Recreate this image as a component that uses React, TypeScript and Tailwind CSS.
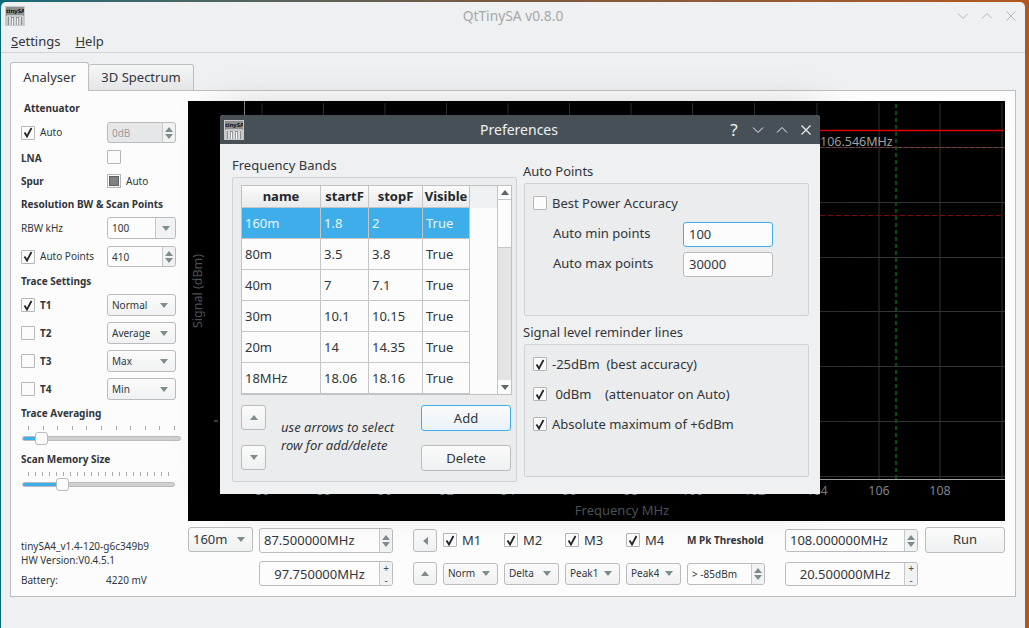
import React from 'react';

const Tri = ({ dir = 'down', color = '#7f8c8d', size = 8 }: { dir?: 'up' | 'down' | 'left'; color?: string; size?: number }) => {
  const pts = dir === 'up' ? '0,5 4,0 8,5' : dir === 'down' ? '0,0 8,0 4,5' : '5,0 5,8 0,4';
  const box = dir === 'left' ? '0 0 5 8' : '0 0 8 5';
  const w = dir === 'left' ? (size * 5) / 8 : size;
  const h = dir === 'left' ? size : (size * 5) / 8;
  return (
    <svg width={w} height={h} viewBox={box} className="shrink-0">
      <polygon points={pts} fill={color} />
    </svg>
  );
};

const Logo = () => (
  <div className="relative w-[20px] h-[20px] shrink-0 bg-[#8b8f90] overflow-hidden border border-[#c8cacb]">
    <span className="absolute left-0 right-0 top-[1px] text-center text-[6px] leading-[7px] font-bold text-[#111]">tinySA</span>
    <svg width="18" height="10" viewBox="0 0 18 10" className="absolute left-0 bottom-0">
      <path d="M1 10V1h16v9" fill="none" stroke="#fff" strokeWidth="1" />
      <path d="M4 10V2M6.500 10V3M9 10V2M11.500 10V3M14 10V2" stroke="#fff" strokeWidth="1.300" />
    </svg>
  </div>
);

const Check = ({ on = false }: { on?: boolean }) => (
  <span className="w-[14px] h-[14px] shrink-0 border border-[#b4b6b7] bg-[#fcfcfc] rounded-[1px] flex items-center justify-center">
    {on && (
      <svg width="10" height="11" viewBox="0 0 10 11">
        <path d="M1.500 5.500L4 9.500L8.500 1" fill="none" stroke="#232629" strokeWidth="1.800" />
      </svg>
    )}
  </span>
);

const Combo = ({ text, w, h = 'h-[22px]', size = 'text-[10px]' }: { text: string; w: string; h?: string; size?: string }) => (
  <div className={`${w} ${h} ${size} flex items-center justify-between pl-[4px] pr-[7px] border border-[#b9bbbc] rounded-[3px] bg-gradient-to-b from-[#fbfbfb] to-[#f0f1f2] text-[#31363b] shrink-0`}>
    <span className="overflow-hidden whitespace-nowrap">{text}</span>
    <Tri />
  </div>
);

const Spin = ({ text, w, center = false, plus = false, size = 'text-[13px]', disabled = false, h = 'h-[24px]' }: {
  text: string; w: string; center?: boolean; plus?: boolean; size?: string; disabled?: boolean; h?: string;
}) => (
  <div className={`${w} ${h} ${size} flex border border-[#b9bbbc] rounded-[3px] shrink-0 ${disabled ? 'bg-[#e6e7e8] text-[#9a9c9e]' : 'bg-[#fcfcfc] text-[#31363b]'}`}>
    <span className={`flex-1 flex items-center whitespace-nowrap ${center ? 'justify-center pt-[2px]' : 'pl-[4px] pt-[1px]'}`}>{text}</span>
    <div className="w-[13px] border-l border-[#c6c8c9] bg-[#f1f2f3] flex flex-col items-center justify-center gap-[2px] rounded-r-[3px]">
      {plus ? (
        <>
          <span className="text-[10px] leading-[10px] text-[#4d4d4d]">+</span>
          <span className="text-[10px] leading-[10px] text-[#4d4d4d]">-</span>
        </>
      ) : (
        <>
          <Tri dir="up" />
          <Tri />
        </>
      )}
    </div>
  </div>
);

const Heading = ({ children, cls = '' }: { children: React.ReactNode; cls?: string }) => (
  <div className={`h-[16px] flex items-center font-bold text-[10px] text-[#31363b] whitespace-nowrap pt-[1px] ${cls}`}>{children}</div>
);

const ArrowBtn = ({ dir, cls }: { dir: 'up' | 'down' | 'left'; cls: string }) => (
  <div className={`${cls} flex items-center justify-center border border-[#b9bbbc] rounded-[3px] bg-gradient-to-b from-[#fbfbfb] to-[#eff0f1] shrink-0`}>
    <Tri dir={dir} />
  </div>
);

const Slider = ({ width, ticks, fill, knob }: { width: string; ticks: number; fill: string; knob: string }) => (
  <div className={`${width} ml-[1px]`}>
    <div className="flex justify-between px-[6px] h-[5px]">
      {Array.from({ length: ticks }).map((_, i) => (
        <span key={i} className="w-px h-[4px] bg-[#a9abac]" />
      ))}
    </div>
    <div className="relative mt-[5px] h-[5px] rounded-full bg-[#cfd0d1] border border-[#b9bbbc]">
      <div className={`absolute left-0 top-0 bottom-0 rounded-l-full bg-[#3daee9] ${fill}`} />
      <div className={`absolute top-[-5px] w-[13px] h-[13px] rounded-[3px] border border-[#b9bbbc] bg-[#fafbfb] ${knob}`} />
    </div>
  </div>
);

const Sidebar = () => (
  <div className="w-[177px] shrink-0 flex flex-col pl-[10px] pt-[9px] pb-[9px] text-[10px] text-[#31363b]">
    <Heading cls="pl-[3px]">Attenuator</Heading>
    <div className="mt-[6px] h-[21px] flex items-center">
      <Check on />
      <span className="ml-[5px] w-[67px]">Auto</span>
      <Spin text="0dB" w="w-[69px]" h="h-[21px]" size="text-[10px]" disabled />
    </div>
    <div className="mt-[7px] h-[14px] flex items-center font-bold">
      <span className="w-[86px] pt-[2px]">LNA</span>
      <Check />
    </div>
    <div className="mt-[10px] h-[14px] flex items-center">
      <span className="w-[86px] font-bold pt-[1px]">Spur</span>
      <span className="w-[14px] h-[14px] border border-[#b4b6b7] bg-[#fcfcfc] flex items-center justify-center">
        <span className="w-[10px] h-[10px] bg-[#808283] border border-[#5d5f60]" />
      </span>
      <span className="ml-[5px]">Auto</span>
    </div>
    <Heading cls="mt-[8px]">Resolution BW &amp; Scan Points</Heading>
    <div className="mt-[5px] h-[22px] flex items-center">
      <span className="w-[86px]">RBW kHz</span>
      <div className="w-[69px] h-[22px] flex items-center border border-[#b9bbbc] rounded-[3px] bg-[#fcfcfc]">
        <span className="flex-1 pl-[4px]">100</span>
        <div className="w-[20px] h-full border-l border-[#c6c8c9] bg-[#f1f2f3] flex items-center justify-center rounded-r-[3px]">
          <Tri />
        </div>
      </div>
    </div>
    <div className="mt-[7px] h-[21px] flex items-center">
      <Check on />
      <span className="ml-[5px] w-[67px]">Auto Points</span>
      <Spin text="410" w="w-[69px]" h="h-[21px]" size="text-[10px]" />
    </div>
    <Heading cls="mt-[6px]">Trace Settings</Heading>
    <div className="mt-[5px] flex flex-col gap-[6px]">
      {[['T1', 'Normal', true], ['T2', 'Average', false], ['T3', 'Max', false], ['T4', 'Min', false]].map(([t, m, on]) => (
        <div key={t as string} className="h-[22px] flex items-center">
          <Check on={on as boolean} />
          <span className="ml-[5px] w-[67px] font-bold pt-[1px]">{t as string}</span>
          <Combo text={m as string} w="w-[69px]" />
        </div>
      ))}
    </div>
    <Heading cls="mt-[5px]">Trace Averaging</Heading>
    <div className="mt-[5px]">
      <Slider width="w-[159px]" ticks={11} fill="w-[14px]" knob="left-[12px]" />
    </div>
    <Heading cls="mt-[10px]">Scan Memory Size</Heading>
    <div className="mt-[5px]">
      <Slider width="w-[153px]" ticks={21} fill="w-[34px]" knob="left-[33px]" />
    </div>
    <div className="mt-auto text-[#31363b] leading-[14px]">
      <div>tinySA4_v1.4-120-g6c349b9</div>
      <div>HW Version:V0.4.5.1</div>
      <div className="mt-[6px] flex">
        <span className="w-[85px]">Battery:</span>
        <span>4220 mV</span>
      </div>
    </div>
  </div>
);

const gridX = [262, 323.5, 385, 446.5, 508, 569.5, 631, 692.5, 754.5, 817, 879, 940, 1002];
const gridY = [147, 202, 257, 311, 366, 421, 476];
const labels = ['86', '88', '90', '92', '94', '96', '98', '100', '102', '104', '106', '108'];

// spectrum plot, coordinates are window px minus the plot origin (188,101)
const Plot = () => (
  <svg width="817" height="420" viewBox="188 101 817 420" className="block bg-black shrink-0" fontFamily="'Noto Sans', sans-serif">
    {gridX.map((x) => (
      <line key={x} x1={x} y1={103} x2={x} y2={479} stroke="#333" strokeWidth="1" />
    ))}
    <line x1={244.500} y1={101} x2={244.500} y2={479} stroke="#8a8a8a" strokeWidth="1" />
    {gridY.map((y) => (
      <line key={y} x1={244} y1={y + 0.5} x2={1005} y2={y + 0.5} stroke="#333" strokeWidth="1" />
    ))}
    <line x1={244} y1={479.500} x2={1005} y2={479.500} stroke="#a8a8a8" strokeWidth="1" />
    <line x1={244} y1={130.500} x2={1004} y2={130.500} stroke="#e00000" strokeWidth="1.300" />
    <line x1={244} y1={147.500} x2={1005} y2={147.500} stroke="#7a4040" strokeWidth="1" strokeDasharray="4 2" />
    <line x1={244} y1={215.500} x2={1004} y2={215.500} stroke="#7a0c10" strokeWidth="1" strokeDasharray="5 3" />
    <line x1={896} y1={104} x2={896} y2={479} stroke="#0b5e10" strokeWidth="1.600" strokeDasharray="4 3" />
    <text x={820} y={146} fontSize="12.500" fill="#a0a4a6">106.546MHz</text>
    {labels.map((l, i) => (
      <text key={l} x={gridX[i]} y={495} fontSize="12.500" fill="#7d8285" textAnchor="middle">{l}</text>
    ))}
    <text x={622} y={515} fontSize="13" fill="#4f565c" textAnchor="middle">Frequency MHz</text>
    <text transform="translate(202 291) rotate(-90)" fontSize="12.500" fill="#4f565c" textAnchor="middle">Signal (dBm)</text>
    <line x1={214} y1={421} x2={218} y2={421} stroke="#8a8a8a" />
  </svg>
);

const Controls = () => (
  <div className="flex-1 flex flex-col text-[#31363b]">
    <div className="mt-[6px] h-[26px] flex items-start">
      <Combo text="160m" w="w-[65px]" h="h-[25px]" size="text-[13px]" />
      <Spin text="87.500000MHz" w="w-[134px] ml-[6px] mt-[1px]" h="h-[25px]" />
      <ArrowBtn dir="left" cls="w-[24px] h-[23px] ml-[20px] mt-[2px]" />
      <div className="w-[6px]" />
      {['M1', 'M2', 'M3', 'M4'].map((m) => (
        <div key={m} className="w-[61px] h-[14px] mt-[6px] flex items-center text-[13px]">
          <Check on />
          <span className="ml-[5px] pt-[1px]">{m}</span>
        </div>
      ))}
      <span className="mt-[6px] h-[14px] flex items-center text-[10px] font-bold w-[98px] whitespace-nowrap pt-[1px]">M Pk Threshold</span>
      <Spin text="108.000000MHz" w="w-[133px] mt-[2px]" h="h-[23px]" />
      <div className="ml-[7px] w-[80px] h-[26px] flex items-center justify-center text-[13px] border border-[#b9bbbc] rounded-[3px] bg-gradient-to-b from-[#fbfbfb] to-[#eff0f1]">Run</div>
    </div>
    <div className="mt-[8px] h-[25px] flex items-center">
      <div className="w-[71px]" />
      <Spin text="97.750000MHz" w="w-[134px]" h="h-[25px]" center plus />
      <ArrowBtn dir="up" cls="w-[24px] h-[23px] ml-[20px]" />
      <div className="w-[6px]" />
      <div className="flex gap-[6px]">
        {['Norm', 'Delta', 'Peak1', 'Peak4'].map((m) => (
          <Combo key={m} text={m} w="w-[55px]" />
        ))}
      </div>
      <Spin text="> -85dBm" w="w-[78px] ml-[6px]" h="h-[22px]" size="text-[10px]" />
      <Spin text="20.500000MHz" w="w-[133px] ml-[20px]" center plus />
    </div>
  </div>
);

const rows = [
  ['160m', '1.8', '2', 'True'],
  ['80m', '3.5', '3.8', 'True'],
  ['40m', '7', '7.1', 'True'],
  ['30m', '10.1', '10.15', 'True'],
  ['20m', '14', '14.35', 'True'],
  ['18MHz', '18.06', '18.16', 'True'],
  ['', '', '', ''],
];
const colW = ['w-[79px]', 'w-[48px]', 'w-[54px]', 'w-[47px]'];

const BandTable = () => (
  <div className="h-[210px] flex border border-[#bfc1c2] bg-[#fcfcfc] overflow-hidden">
    <div className="flex-1 overflow-hidden">
      <div className="flex h-[22px] bg-[#eff0f1]">
        {['name', 'startF', 'stopF', 'Visible'].map((h, i) => (
          <div key={h} className={`${colW[i]} h-full flex items-center justify-center font-bold border-r border-[#c3c5c6] border-b bg-gradient-to-b from-[#fbfbfb] to-[#e9eaeb] text-[#232629] pt-[1px]`}>{h}</div>
        ))}
      </div>
      {rows.map((r, i) => (
        <div key={i} className={`flex h-[31px] w-[228px] border-b border-[#c3c5c6] ${i === 0 ? 'bg-[#3daee9] text-[#eaf6fc]' : 'text-[#31363b]'}`}>
          {r.map((c, j) => (
            <div key={j} className={`${colW[j]} h-full flex items-center pl-[3px] pt-[1px] border-r border-[#c3c5c6]`}>{c}</div>
          ))}
        </div>
      ))}
    </div>
    <div className="w-[14px] border-l border-[#c3c5c6] flex flex-col bg-[#e3e4e5]">
      <div className="h-[14px] flex items-center justify-center bg-[#fcfcfc] border-b border-[#c3c5c6]">
        <Tri dir="up" color="#5d6467" />
      </div>
      <div className="h-[48px] bg-[#fcfcfc] border-b border-[#c3c5c6]" />
      <div className="flex-1" />
      <div className="h-[14px] flex items-center justify-center bg-[#fcfcfc]">
        <Tri color="#5d6467" />
      </div>
    </div>
  </div>
);

const Box = ({ children, cls }: { children: React.ReactNode; cls: string }) => (
  <div className={`${cls} border border-[#d0d2d3] rounded-[2px] bg-[#ebeced]`}>{children}</div>
);

const Preferences = () => (
  <div className="absolute left-[220px] top-[115px] w-[600px] h-[379px] flex flex-col rounded-t-[4px] bg-[#eff0f1] shadow-[0_0_45px_rgba(0,0,0,0.28)] text-[13px] text-[#31363b]">
    <div className="h-[29px] shrink-0 bg-[#475057] rounded-t-[4px] flex items-center pl-[4px] pr-[8px] text-[#eff0f1]">
      <Logo />
      <span className="flex-1 text-center text-[14px] pl-[66px]">Preferences</span>
      <div className="flex items-center gap-[12px]">
        <span className="text-[17px] leading-none w-[12px] text-center">?</span>
        <svg width="12" height="12" viewBox="0 0 12 12"><path d="M1 3.500L6 8.500L11 3.500" fill="none" stroke="#eff0f1" /></svg>
        <svg width="12" height="12" viewBox="0 0 12 12"><path d="M1 8.500L6 3.500L11 8.500" fill="none" stroke="#eff0f1" /></svg>
        <svg width="12" height="12" viewBox="0 0 12 12"><path d="M1.500 1.500L10.500 10.500M10.500 1.500L1.500 10.500" fill="none" stroke="#eff0f1" strokeWidth="1.200" /></svg>
      </div>
    </div>
    <div className="flex-1 flex pl-[12px]">
      <div className="w-[285px] shrink-0 flex flex-col">
        <div className="h-[18px] mt-[12px] pt-[1px] flex items-center">Frequency Bands</div>
        <Box cls="mt-[3px] h-[305px] flex flex-col pl-[8px] pr-[4px] pt-[7px]">
          <BandTable />
          <div className="flex mt-[10px] pr-[1px]">
            <div className="flex flex-col gap-[15px]">
              <ArrowBtn dir="up" cls="w-[25px] h-[25px]" />
              <ArrowBtn dir="down" cls="w-[25px] h-[25px]" />
            </div>
            <div className="flex-1 pl-[15px] pt-[13px] italic text-[13px] leading-[18px] whitespace-nowrap">
              use arrows to select<br />row for add/delete
            </div>
            <div className="flex flex-col gap-[14px] w-[90px]">
              <div className="h-[26px] pt-[1px] flex items-center justify-center border border-[#3daee9] rounded-[3px] bg-gradient-to-b from-[#fbfbfb] to-[#e8f2f8]">Add</div>
              <div className="h-[26px] pt-[1px] flex items-center justify-center border border-[#b9bbbc] rounded-[3px] bg-gradient-to-b from-[#fbfbfb] to-[#eff0f1]">Delete</div>
            </div>
          </div>
        </Box>
      </div>
      <div className="ml-[7px] w-[285px] flex flex-col">
        <div className="h-[18px] mt-[18px] pt-[1px] flex items-center -ml-px">Auto Points</div>
        <Box cls="mt-[3px] h-[133px] pl-[8px] pt-[12px]">
          <div className="flex items-center gap-[5px] h-[14px]"><Check /><span className="pt-[1px]">Best Power Accuracy</span></div>
          <div className="mt-[12px] flex items-center h-[25px] pl-[20px]">
            <span className="w-[130px] pb-[2px]">Auto min points</span>
            <span className="w-[90px] h-[25px] pt-[1px] flex items-center pl-[5px] border border-[#3daee9] rounded-[3px] bg-[#fcfcfc]">100</span>
          </div>
          <div className="mt-[5px] flex items-center h-[25px] pl-[20px]">
            <span className="w-[130px] pb-[2px]">Auto max points</span>
            <span className="w-[90px] h-[25px] pt-[1px] flex items-center pl-[5px] border border-[#b9bbbc] rounded-[3px] bg-[#fcfcfc]">30000</span>
          </div>
        </Box>
        <div className="h-[18px] mt-[7px] pt-[1px] flex items-center -ml-px">Signal level reminder lines</div>
        <Box cls="mt-[3px] h-[133px] pl-[8px] pt-[12px] flex flex-col gap-[16px]">
          <div className="flex items-center gap-[5px] h-[14px]"><Check on /><span className="whitespace-pre pt-[1px]">-25dBm  (best accuracy)</span></div>
          <div className="flex items-center gap-[5px] h-[14px]"><Check on /><span className="whitespace-pre pt-[1px]"> 0dBm    (attenuator on Auto)</span></div>
          <div className="flex items-center gap-[5px] h-[14px]"><Check on /><span className="pt-[1px]">Absolute maximum of +6dBm</span></div>
        </Box>
      </div>
    </div>
  </div>
);

export default function App() {
  return (
    <div className="relative w-[1029px] h-[628px] overflow-hidden bg-gradient-to-r from-[#0b6a78] via-[#7a5a40] to-[#b2561c] font-['Noto_Sans',sans-serif]">
      <div className="ml-[1px] mt-[2px] w-[1024px] h-[626px] flex flex-col rounded-t-[5px] bg-[#eff0f1] text-[#31363b]">
        <div className="h-[28px] shrink-0 flex items-center pl-[4px] pr-[8px]">
          <Logo />
          <span className="flex-1 text-center text-[13.8px] text-[#a5a8aa] pl-[44px]">QtTinySA v0.8.0</span>
          <div className="flex items-center gap-[12px]">
            <svg width="12" height="12" viewBox="0 0 12 12"><path d="M1 3.500L6 8.500L11 3.500" fill="none" stroke="#b5b8ba" /></svg>
            <svg width="12" height="12" viewBox="0 0 12 12"><path d="M1 8.500L6 3.500L11 8.500" fill="none" stroke="#b5b8ba" /></svg>
            <svg width="12" height="12" viewBox="0 0 12 12"><path d="M1.500 1.500L10.500 10.500M10.500 1.500L1.500 10.500" fill="none" stroke="#b5b8ba" /></svg>
          </div>
        </div>
        <div className="h-[23px] shrink-0 flex items-center pl-[10px] gap-[15px] text-[13px] border-b border-[#d0d2d3]">
          <span className="pt-[1px]"><u>S</u>ettings</span>
          <span className="pt-[1px]"><u>H</u>elp</span>
        </div>
        <div className="mt-[9px] ml-[9px] h-[29px] shrink-0 flex items-end text-[13px] relative z-10">
          <div className="w-[79px] h-[29px] pt-[1px] flex items-center justify-center bg-[#fcfcfc] border border-b-0 border-[#bcbebf] rounded-t-[3px]">Analyser</div>
          <div className="w-[105px] h-[27px] pt-[1px] flex items-center justify-center bg-gradient-to-b from-[#f5f6f6] to-[#e4e5e6] border border-l-0 border-[#bcbebf] rounded-t-[3px]">3D Spectrum</div>
        </div>
        <div className="ml-[9px] -mt-px w-[1006px] h-[507px] shrink-0 flex border border-[#bcbebf] bg-[#fcfcfc]">
          <Sidebar />
          <div className="flex flex-col pt-[10px]">
            <Plot />
            <Controls />
          </div>
        </div>
      </div>
      <Preferences />
    </div>
  );
}
